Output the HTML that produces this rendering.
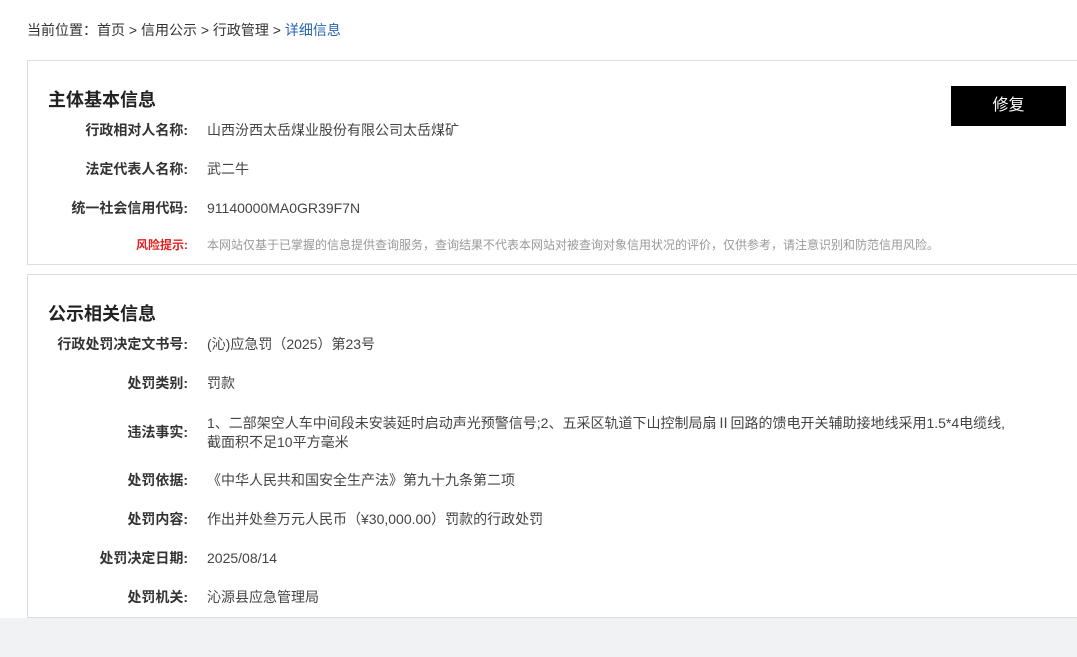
<!DOCTYPE html>
<html><head><meta charset="utf-8"><style>
body{margin:0;width:1077px;height:657px;background:#fff;position:relative;overflow:hidden;font-family:"Liberation Sans","Noto Sans CJK SC",sans-serif;color:#333}
.a{position:absolute;white-space:nowrap;line-height:1}
.panel{position:absolute;left:27px;width:1060px;border:1px solid #ddd;background:#fff;box-sizing:border-box}
.t{font-size:18px;font-weight:bold;color:#222}
.l{font-size:14px;font-weight:bold;color:#333;text-align:right;right:889px}
.v{font-size:14px;color:#444;left:207px}
</style></head><body>
<div class="a" style="left:27px;top:23px;font-size:14px;color:#333">当前位置：首页 &gt; 信用公示 &gt; 行政管理 &gt; <span style="color:#2a64b0">详细信息</span></div>
<div class="panel" style="top:60px;height:205px"></div>
<div class="panel" style="top:274px;height:344px"></div>
<div style="position:absolute;left:0;top:618px;width:1077px;height:39px;background:#f1f2f4"></div>
<div class="a" style="left:951px;top:86px;width:115px;height:40px;background:#000;color:#fff;font-size:16px;line-height:40px;text-align:center">修复</div>
<div class="a t" style="left:48px;top:91px">主体基本信息</div>
<div class="a l" style="top:123px">行政相对人名称:</div><div class="a v" style="top:123px">山西汾西太岳煤业股份有限公司太岳煤矿</div>
<div class="a l" style="top:162px">法定代表人名称:</div><div class="a v" style="top:162px">武二牛</div>
<div class="a l" style="top:201px">统一社会信用代码:</div><div class="a v" style="top:201px">91140000MA0GR39F7N</div>
<div class="a l" style="top:239px;font-size:12px;color:#e02020">风险提示:</div><div class="a v" style="top:239px;font-size:12px;color:#999">本网站仅基于已掌握的信息提供查询服务，查询结果不代表本网站对被查询对象信用状况的评价，仅供参考，请注意识别和防范信用风险。</div>
<div class="a t" style="left:48px;top:305px">公示相关信息</div>
<div class="a l" style="top:337px">行政处罚决定文书号:</div><div class="a v" style="top:337px">(沁)应急罚（2025）第23号</div>
<div class="a l" style="top:376px">处罚类别:</div><div class="a v" style="top:376px">罚款</div>
<div class="a l" style="top:425px">违法事实:</div><div class="a v" style="top:416px">1、二部架空人车中间段未安装延时启动声光预警信号;2、五采区轨道下山控制局扇Ⅱ回路的馈电开关辅助接地线采用1.5*4电缆线,</div><div class="a v" style="top:435px">截面积不足10平方毫米</div>
<div class="a l" style="top:473px">处罚依据:</div><div class="a v" style="top:473px">《中华人民共和国安全生产法》第九十九条第二项</div>
<div class="a l" style="top:512px">处罚内容:</div><div class="a v" style="top:512px">作出并处叁万元人民币（¥30,000.00）罚款的行政处罚</div>
<div class="a l" style="top:551px">处罚决定日期:</div><div class="a v" style="top:551px">2025/08/14</div>
<div class="a l" style="top:590px">处罚机关:</div><div class="a v" style="top:590px">沁源县应急管理局</div>
</body></html>
